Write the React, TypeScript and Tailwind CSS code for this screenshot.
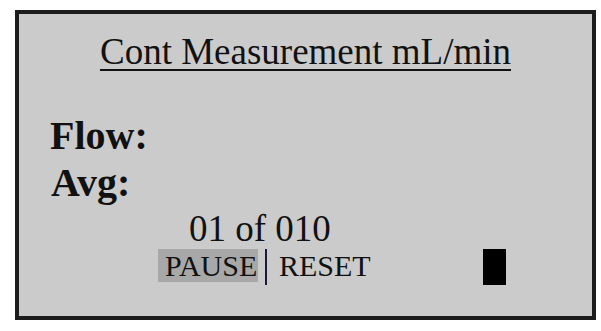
export default function App() {
  return (
    <div className="h-[331px] w-[601px] bg-white pl-[15px] pt-[10px]">
      <div className="flex h-[310px] w-[581px] flex-col border-4 border-[#1c1c1c] bg-[#cbcbcb] text-[#111] font-['Liberation_Serif','Times_New_Roman',serif]">
        <div className="mt-[19px] text-center text-[37px] leading-[38px] underline decoration-2 underline-offset-[5px]">
          Cont Measurement mL/min
        </div>

        <div className="mt-[41px] pl-[31px] text-[40px] font-bold leading-[47px]">Flow:</div>
        <div className="pl-[32px] text-[40px] font-bold leading-[47px]">Avg:</div>

        <div className="mt-[4px] pl-[170px] text-[37px] leading-[37px]">01 of 010</div>

        <div className="mt-[2px] flex items-start pl-[139px] text-[30px] leading-[33px]">
          <span className="w-[100px] bg-[#a8a8a8] pl-[7px]">PAUSE</span>
          <span className="ml-[7px] h-[36px] w-[2px] bg-[#1a1a3a]" />
          <span className="ml-[12px]">RESET</span>
          <span className="ml-[112px] h-[36px] w-[23px] bg-black" />
        </div>
      </div>
    </div>
  );
}
